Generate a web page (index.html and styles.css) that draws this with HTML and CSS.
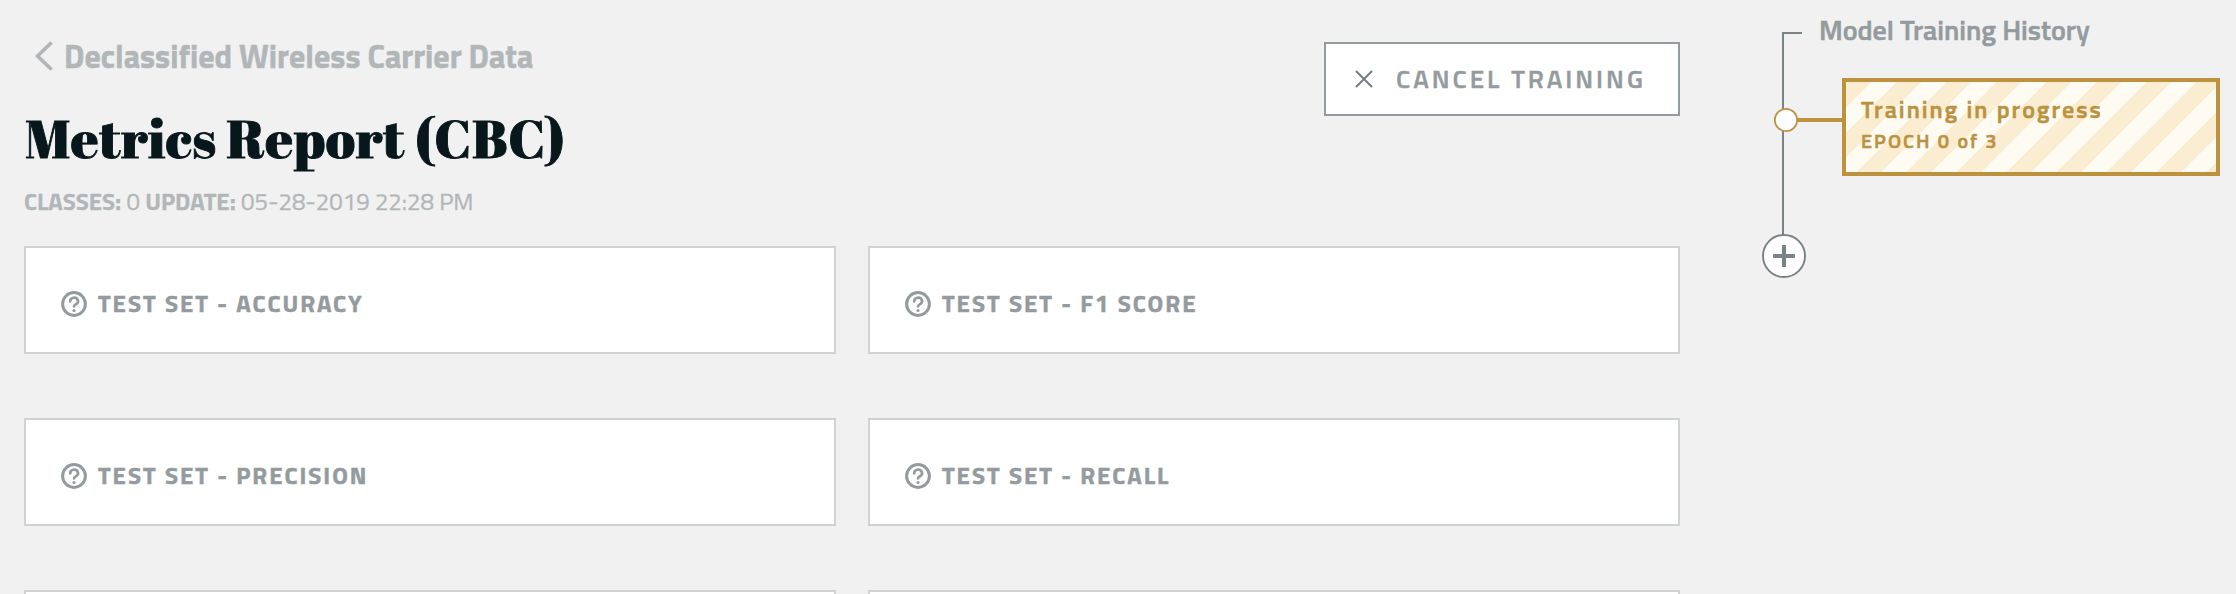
FILE: index.html
```html
<!DOCTYPE html>
<html lang="en">
<head>
<meta charset="utf-8">
<title>Metrics Report</title>
<link rel="stylesheet" href="styles.css">
</head>
<body>
<svg class="defs" width="0" height="0" aria-hidden="true">
  <symbol id="help" viewBox="0 0 26 26">
    <g fill="none" stroke="currentColor" stroke-linecap="round">
      <circle cx="13" cy="13" r="11.4" stroke-width="3"/>
      <path d="M9.2 10.400a3.900 3.500 0 1 1 5.900 2.800c-1.300.8-2.100 1.200-2.100 2.300" stroke-width="2.700"/>
    </g>
    <circle cx="13" cy="19.500" r="1.600" fill="currentColor"/>
  </symbol>
</svg>
<div class="layout">
  <main class="report">
    <header class="head">
      <div class="heading">
        <a class="back"><svg class="chevron" viewBox="0 0 18 30"><path d="M15.500 2.500 2.500 15l13 12.500"/></svg><span>Declassified Wireless Carrier Data</span></a>
        <h1 class="title">Metrics Report (CBC)</h1>
        <p class="meta"><b>CLASSES:</b> 0 <b>UPDATE:</b> 05-28-2019 22:28 PM</p>
      </div>
      <button class="cancel"><svg class="cross" viewBox="0 0 18 18"><path d="M1.500 1.500l15 15M16.500 1.500l-15 15"/></svg><span>CANCEL TRAINING</span></button>
    </header>
    <section class="cards">
      <article class="card"><svg class="help"><use href="#help"/></svg><span>TEST SET - ACCURACY</span></article>
      <article class="card"><svg class="help"><use href="#help"/></svg><span>TEST SET - F1 SCORE</span></article>
      <article class="card"><svg class="help"><use href="#help"/></svg><span>TEST SET - PRECISION</span></article>
      <article class="card"><svg class="help"><use href="#help"/></svg><span>TEST SET - RECALL</span></article>
      <article class="card"></article>
      <article class="card"></article>
    </section>
  </main>
  <aside class="history">
    <svg class="timeline" viewBox="0 0 80 280">
      <path d="M40 33H21V236" fill="none" stroke="#7a8487" stroke-width="2"/>
      <path d="M36 120H80" stroke="#bc923f" stroke-width="4"/>
      <circle cx="24" cy="120" r="11.200" fill="#fff" stroke="#bc923f" stroke-width="1.700"/>
      <circle cx="22" cy="256" r="21" fill="#fff" stroke="#7a8487" stroke-width="2"/>
      <path d="M11 256H33M22 245V267" stroke="#7a8487" stroke-width="4"/>
    </svg>
    <div class="entries">
      <h2 class="history-title">Model Training History</h2>
      <div class="progress">
        <div class="status">Training in progress</div>
        <div class="epoch">EPOCH 0 of 3</div>
      </div>
    </div>
  </aside>
</div>
</body>
</html>
```
FILE: styles.css
```css
* { box-sizing: border-box; margin: 0; padding: 0; }
html { overflow: hidden; }
body { background: #f1f1f1; height: 594px; overflow: hidden; font-family: "Titillium Web", Roboto, sans-serif; color: #939b9e; white-space: nowrap; -webkit-text-stroke: 0.5px currentColor; }
.defs { display: block; height: 0; }
svg { flex: none; }
.layout { display: flex; height: 594px; overflow: hidden; }
.report { width: 1656px; margin-left: 24px; }
.head { display: flex; justify-content: space-between; align-items: flex-start; height: 246px; padding-top: 37px; }
.back { display: flex; align-items: center; height: 38px; padding-left: 11px; gap: 11px; font-size: 32px; line-height: 38px; font-weight: 700; color: #b1b7b9; }
.chevron { width: 18px; height: 30px; fill: none; stroke: #b1b7b9; stroke-width: 3.8; stroke-linecap: round; stroke-linejoin: round; }
.title { margin-top: 25px; height: 76px; padding-left: 1px; line-height: 76px; font-family: "Noe Display", "Abril Fatface", "Liberation Serif", serif; font-size: 54px; font-weight: 400; letter-spacing: 0.5px; color: #07171c; -webkit-text-stroke: 0.9px #07171c; }
.meta { margin-top: 10px; height: 30px; line-height: 30px; font-size: 24px; color: #b1b7b9; -webkit-text-stroke: 0.3px currentColor; }
.cancel { display: flex; align-items: center; width: 356px; height: 74px; margin-top: 5px; padding-left: 29px; border: 2px solid #939b9e; background: #fff; font: 600 26px/30px "Titillium Web", Roboto, sans-serif; letter-spacing: 3px; color: #939b9e; gap: 23px; white-space: nowrap; -webkit-text-stroke: 0.4px currentColor; }
.cross { width: 18px; height: 18px; margin-top: -1px; stroke: #747d84; stroke-width: 2; stroke-linecap: round; }
.cards { display: grid; grid-template-columns: 812px 812px; grid-auto-rows: 108px; gap: 64px 32px; }
.card { display: flex; align-items: center; padding: 8px 0 0 35px; gap: 11px; border: 2px solid #ced3d2; background: #fff; font-size: 24px; font-weight: 700; line-height: 30px; letter-spacing: 2px; }
.card span { margin-top: -2px; }
.help { width: 26px; height: 26px; }
.history { display: flex; margin-left: 82px; }
.timeline { width: 80px; height: 280px; }
.history-title { height: 78px; padding-top: 13px; margin-left: -23px; font-size: 28px; font-weight: 600; line-height: 34px; }
.progress { width: 378px; height: 98px; padding: 12px 0 0 15px; border: 4px solid #bc923f; color: #bc923f; background: repeating-linear-gradient(135deg, #fbedd1 0 17.68px, #fefbf2 17.68px 35.36px); }
.status { font-size: 24px; font-weight: 600; line-height: 30px; letter-spacing: 2px; }
.epoch { font-size: 20px; font-weight: 600; line-height: 33px; letter-spacing: 2px; }
```
